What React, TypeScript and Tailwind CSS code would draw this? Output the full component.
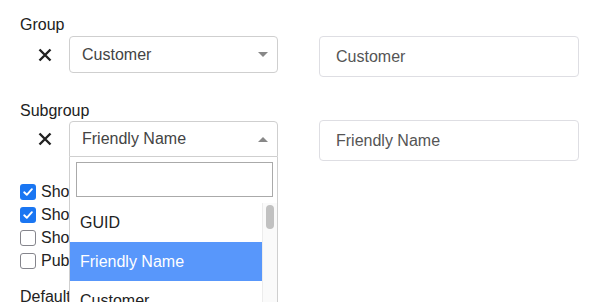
import React from 'react';

const CloseIcon = () => (
  <svg width="14" height="14" viewBox="0 0 14 14" aria-hidden="true">
    <path d="M1.5 1.5 L12.5 12.5 M12.5 1.5 L1.5 12.5" stroke="#222" strokeWidth="2.4" strokeLinecap="butt" />
  </svg>
);

const Checkbox = ({ checked }: { checked: boolean }) =>
  checked ? (
    <span className="w-4 h-4 rounded-[3px] bg-[#1a76f2] flex items-center justify-center shrink-0">
      <svg width="12" height="12" viewBox="0 0 12 12" aria-hidden="true">
        <path d="M2.2 6.3 L4.8 8.8 L9.9 3.2" fill="none" stroke="#fff" strokeWidth="1.9" strokeLinecap="round" strokeLinejoin="round" />
      </svg>
    </span>
  ) : (
    <span className="w-4 h-4 rounded-[3px] border-[1.5px] border-[#85858c] bg-white shrink-0" />
  );

const Arrow = ({ up }: { up?: boolean }) => (
  <span
    className={
      up
        ? 'w-0 h-0 border-x-[5px] border-x-transparent border-b-[5px] border-b-[#888]'
        : 'w-0 h-0 border-x-[5px] border-x-transparent border-t-[5px] border-t-[#888]'
    }
  />
);

const options = ['GUID', 'Friendly Name', 'Customer'];

const App = () => {
  return (
    <div className="w-[601px] h-[302px] overflow-hidden bg-white pl-5 pt-[14px] text-[16px] text-[#222] font-['Liberation_Sans',Arial,sans-serif]">
      {/* Group */}
      <div className="h-[22px] leading-[22px]">Group</div>
      <div className="flex items-start">
        <div className="w-[49px] h-[37px] flex items-center justify-center">
          <CloseIcon />
        </div>
        <div className="w-[209px] h-[37px] border border-[#cfcfcf] rounded-[4px] flex items-center justify-between pl-3 pr-[9px] text-[#444]">
          <span>Customer</span>
          <Arrow />
        </div>
        <div className="ml-[41px] w-[260px] h-[41px] border border-[#dedee3] rounded-[4px] flex items-center pl-4 text-[#555]">
          Customer
        </div>
      </div>

      {/* Subgroup */}
      <div className="mt-[23px] h-[21px] leading-[21px]">Subgroup</div>
      <div className="flex items-start">
        <div className="w-[49px] h-[36px] flex items-center justify-center">
          <CloseIcon />
        </div>
        <div className="relative z-10 w-[209px]">
          <div className="h-[36px] border border-[#cfcfcf] rounded-t-[4px] flex items-center justify-between pl-3 pr-[9px] text-[#444]">
            <span>Friendly Name</span>
            <Arrow up />
          </div>
          <div className="absolute top-full left-0 w-[209px] bg-white border-x border-[#cfcfcf]">
            <div className="pl-[6px] pr-[4px] pt-[5px] pb-[6px]">
              <div className="h-[35px] border border-[#aaa] bg-white" />
            </div>
            <div className="flex">
              <div className="flex-1">
                {options.map((o) => (
                  <div
                    key={o}
                    className={
                      o === 'Friendly Name'
                        ? 'h-[39px] leading-[39px] pl-[10px] bg-[#5897fb] text-white'
                        : 'h-[39px] leading-[39px] pl-[10px] text-[#222]'
                    }
                  >
                    {o}
                  </div>
                ))}
              </div>
              <div className="w-[15px] bg-[#fafafa] border-l border-[#ececec] pt-[2px] flex justify-center">
                <div className="w-[8px] h-[24px] rounded-full bg-[#c1c1c1]" />
              </div>
            </div>
          </div>
        </div>
        <div className="ml-[41px] -mt-px w-[260px] h-[41px] border border-[#dedee3] rounded-[4px] flex items-center pl-4 text-[#555]">
          Friendly Name
        </div>
      </div>

      {/* Options */}
      <div className="mt-[19px] flex flex-col">
        {[
          { label: 'Show totals', checked: true },
          { label: 'Show subtotals', checked: true },
          { label: 'Show empty groups', checked: false },
          { label: 'Public', checked: false },
        ].map((c) => (
          <label key={c.label} className="h-[23px] flex items-center gap-[5px] whitespace-nowrap">
            <Checkbox checked={c.checked} />
            <span>{c.label}</span>
          </label>
        ))}
      </div>

      <div className="mt-[15px] leading-[20px]">Default</div>
    </div>
  );
};

export default App;
